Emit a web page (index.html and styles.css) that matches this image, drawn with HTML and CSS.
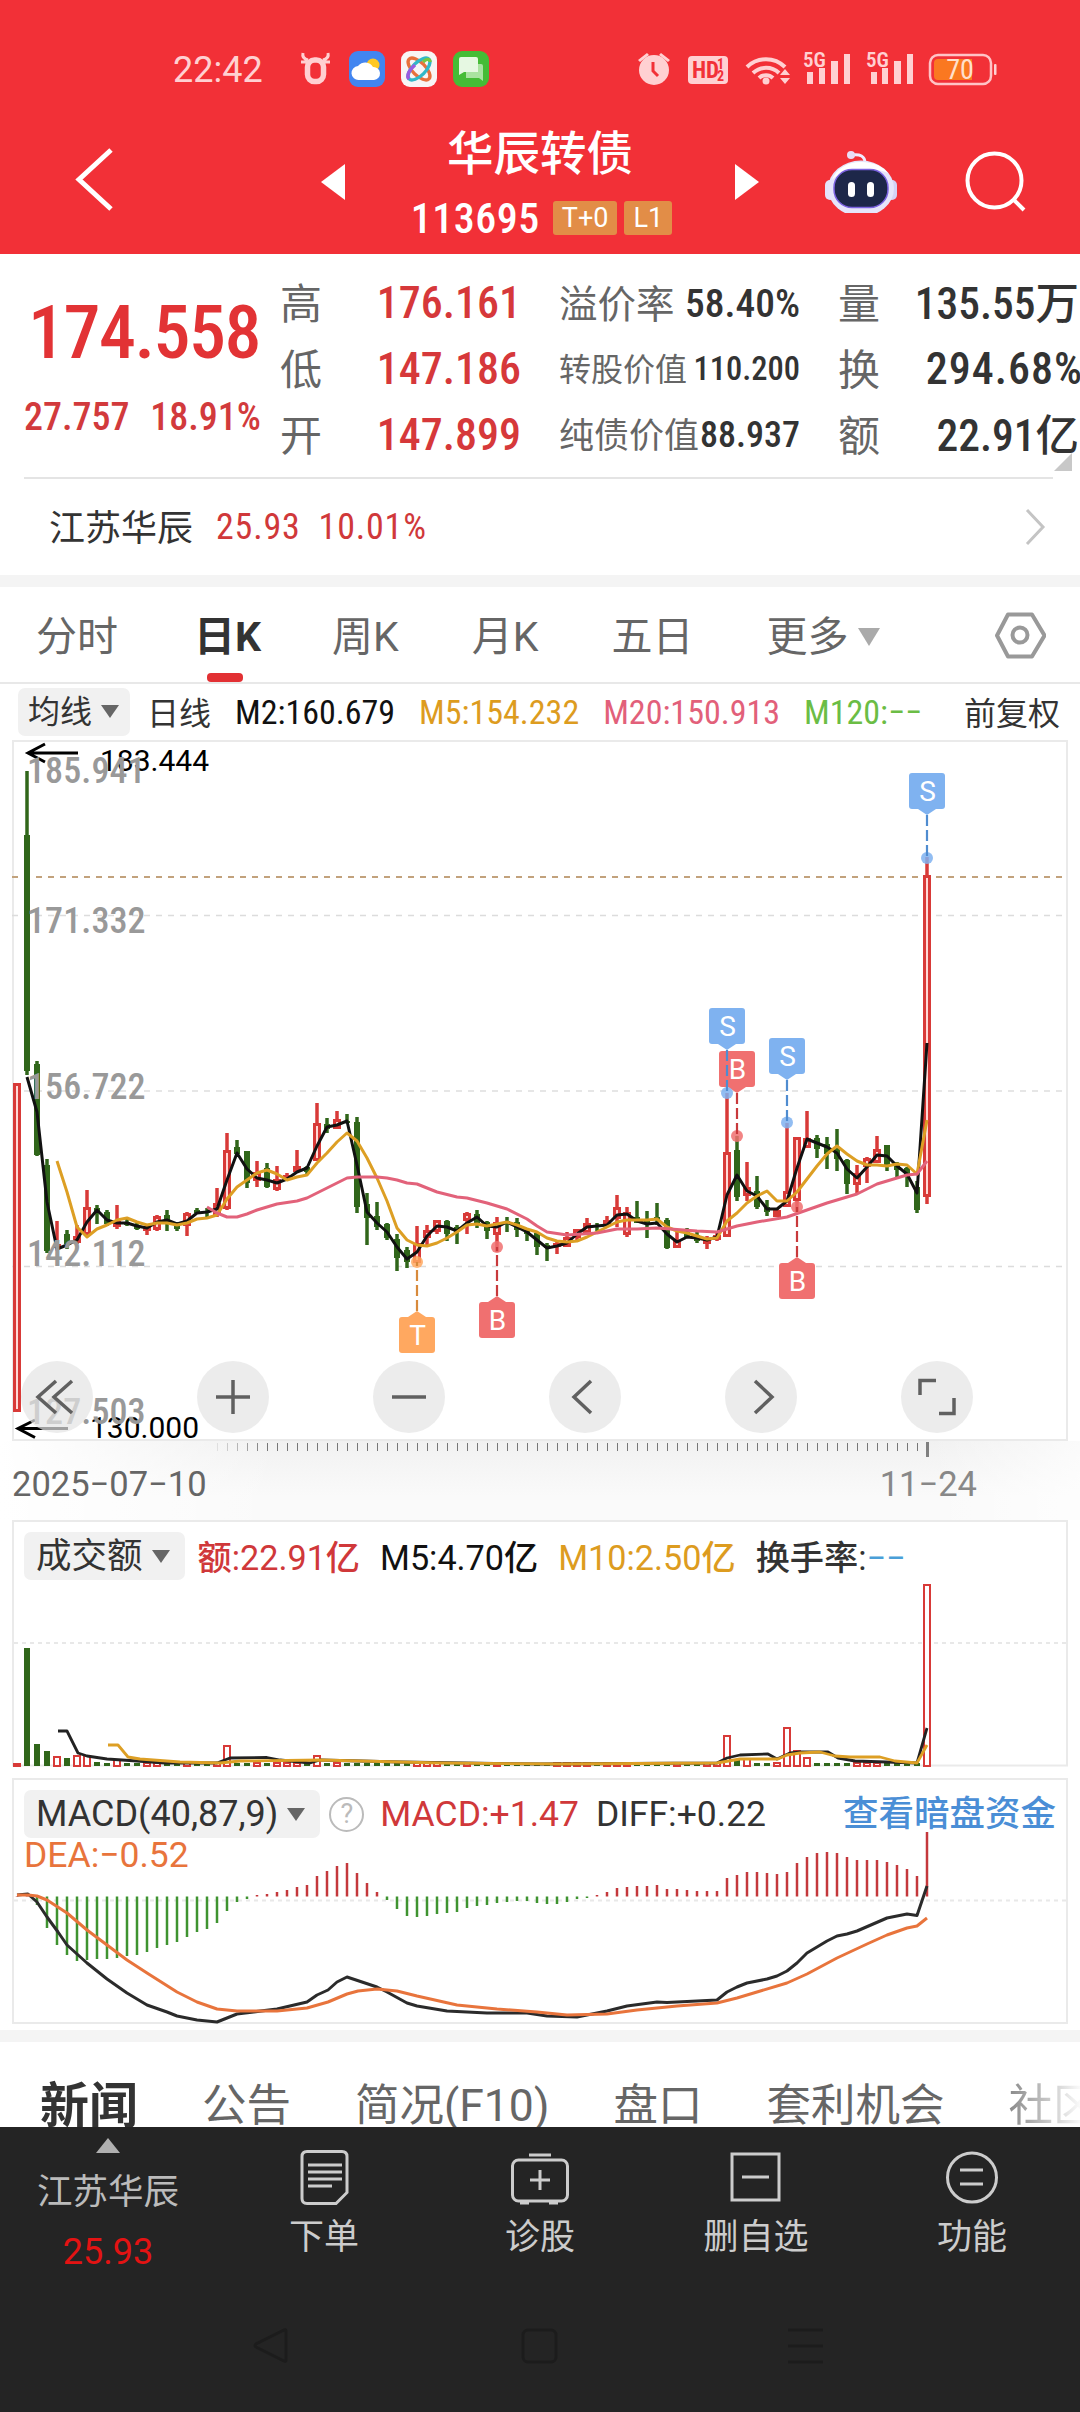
FILE: index.html
```html
<!DOCTYPE html>
<html lang="zh-CN">
<head>
    <meta charset="UTF-8">
    <meta name="viewport" content="width=device-width, initial-scale=1.0">
    <title>华辰转债 113695</title>
    <link rel="stylesheet" href="styles.css">
</head>
<body>
    <header class="header">
        <div class="status-bar">
            <span class="clock">22:42</span>
            <svg class="status-left" width="200" height="40" viewBox="295 49 200 40">
                <path d="M303 53c-1 4 1 6 5 7M328 53c1 4-1 6-5 7M301 62h6M330 62h-6" stroke="#ffd0d2" stroke-width="3" fill="none"/>
                <rect x="307.500" y="60" width="16" height="21.500" rx="7" fill="none" stroke="#ffd0d2" stroke-width="5.500"/>
                <rect x="349" y="51" width="36" height="36" rx="9" fill="#4285f0"/>
                <circle cx="373" cy="65" r="6.500" fill="#ffc824"/>
                <path d="M359 80a7 7 0 0 1-1-14 9 9 0 0 1 15 1 6.500 6.500 0 0 1 1 13z" fill="#fff"/>
                <rect x="401" y="51" width="36" height="36" rx="9" fill="#f8f5f5"/>
                <g fill="none" stroke-width="3.400">
                    <ellipse cx="419" cy="69" rx="14" ry="6.500" transform="rotate(45 419 69)" stroke="#e8703c"/>
                    <ellipse cx="419" cy="69" rx="14" ry="6.500" transform="rotate(-45 419 69)" stroke="#31b8c8"/>
                    <path d="M409 79c-3-3 0-9 6-14" stroke="#9b5be0"/>
                    <path d="M423 62c4-4 7-3 7 0" stroke="#77c843"/>
                </g>
                <rect x="453" y="51" width="36" height="36" rx="9" fill="#45bc36"/>
                <path d="M466 64h15q2 0 2 2v15l-4-3h-13z" fill="#a9e3a0"/>
                <path d="M461 57h15q2 0 2 2v13h-14l-5 3V59q0-2 2-2z" fill="#e6f8e2"/>
            </svg>
            <svg class="status-right" width="370" height="40" viewBox="635 49 370 40">
                <g fill="#ffd0d2">
                    <circle cx="654" cy="70" r="15"/>
                    <path d="M638 60l9-7 2 2-9 7zM670 60l-9-7-2 2 9 7z"/>
                    <rect x="688" y="56" width="40" height="28" rx="4"/>
                    <circle cx="766" cy="81" r="3.500"/>
                    <path d="M780 78l5 6 5-6zM780 75l5-6 5 6z"/>
                    <path d="M807 72h6v12h-6zM819 68h6v16h-6zM831 61h7v23h-7zM844 54h6v30h-6z"/>
                    <path d="M871 72h6v12h-6zM882 68h6v16h-6zM894 61h7v23h-7zM907 54h6v30h-6z"/>
                    <rect x="994" y="64" width="2.500" height="11" rx="1"/>
                </g>
                <path d="M653 62v9l5 5" fill="none" stroke="#f23037" stroke-width="3"/>
                <g fill="none" stroke="#ffd0d2" stroke-width="4">
                    <path d="M747 67a27 27 0 0 1 38 0M753 73a19 19 0 0 1 26 0M759 78a10 10 0 0 1 14 0"/>
                </g>
                <rect x="930" y="55" width="61" height="29" rx="8" fill="none" stroke="#ffc3c6" stroke-width="2.500"/>
                <path d="M938 59h34v21h-34q-4 0-4-4v-13q0-4 4-4z" fill="#fa7820"/>
                <text class="st-hd" x="692" y="78">HD</text>
                <text class="st-mini" x="717" y="69">1</text>
                <text class="st-mini" x="717" y="81">2</text>
                <text class="st-5g" x="803" y="67">5G</text>
                <text class="st-5g" x="866" y="67">5G</text>
                <text class="st-bat" x="960" y="79">70</text>
            </svg>
        </div>
        <div class="nav">
            <svg width="46" height="68" viewBox="72 145 46 68"><path d="M111 150L79 179.500 111 209" fill="none" stroke="#fff" stroke-width="5"/></svg>
            <svg class="prev" width="24" height="36" viewBox="0 0 24 36"><path d="M24 0v36L0 18z" fill="#fff"/></svg>
            <div class="title">
                <h1>华辰转债</h1>
                <div class="code">113695<span class="tag">T+0</span><span class="tag">L1</span></div>
            </div>
            <svg class="next" width="24" height="36" viewBox="0 0 24 36"><path d="M0 0v36l24-18z" fill="#fff"/></svg>
            <svg class="robot" width="74" height="68" viewBox="824 145 74 68">
                <path d="M865 163c0-7-5-9-13-8" fill="none" stroke="#f1ecff" stroke-width="3"/>
                <circle cx="851" cy="155" r="4" fill="#e9ddf6"/>
                <rect x="825" y="180" width="10" height="20" rx="5" fill="#e4e3fb"/>
                <rect x="887" y="180" width="10" height="20" rx="5" fill="#d4d2f5"/>
                <ellipse cx="861" cy="188.500" rx="33" ry="28" fill="#e6e5fa"/>
                <path d="M832 180c4-11 15-18 29-18s22 5 27 11c-10-5-44-7-56 7z" fill="#fff"/>
                <rect x="834" y="169.500" width="54" height="38" rx="18" fill="#1d2749" stroke="#7b62e0" stroke-width="1.500"/>
                <rect x="848" y="182" width="7" height="15" rx="3.500" fill="#fff"/>
                <rect x="867" y="182" width="7" height="15" rx="3.500" fill="#fff"/>
            </svg>
            <svg class="search" width="64" height="64" viewBox="964 150 64 64"><circle cx="994.500" cy="180.500" r="27" fill="none" stroke="#fff" stroke-width="4"/><path d="M1013 199l11 11" stroke="#fff" stroke-width="4"/></svg>
        </div>
    </header>

    <section class="quote">
        <div class="price">
            <div class="last">174.558</div>
            <div class="change"><span>27.757</span><span>18.91%</span></div>
        </div>
        <div class="cells">
            <div class="cell up"><label>高</label><b>176.161</b></div>
            <div class="cell up"><label>低</label><b>147.186</b></div>
            <div class="cell up"><label>开</label><b>147.899</b></div>
        </div>
        <div class="cells middle">
            <div class="cell size-l"><label>溢价率</label><b>58.40%</b></div>
            <div class="cell size-s"><label>转股价值</label><b>110.200</b></div>
            <div class="cell size-m"><label>纯债价值</label><b>88.937</b></div>
        </div>
        <div class="cells">
            <div class="cell cjk"><label>量</label><b>135.55万</b></div>
            <div class="cell percent"><label>换</label><b>294.68%</b></div>
            <div class="cell cjk"><label>额</label><b>22.91亿</b></div>
        </div>
        <i class="corner"></i>
    </section>

    <section class="stock">
        <span class="stock-name">江苏华辰</span>
        <span class="red">25.93</span>
        <span class="red">10.01%</span>
        <svg width="22" height="40" viewBox="0 0 22 40"><path d="M2 3l16 17L2 37" fill="none" stroke="#c4c4c4" stroke-width="3"/></svg>
    </section>

    <nav class="periods">
        <span>分时</span>
        <span class="active">日K</span>
        <span>周K</span>
        <span>月K</span>
        <span>五日</span>
        <span class="more">更多<i class="arrow"></i></span>
        <svg width="52" height="50" viewBox="994 610 52 50"><path d="M1008 614.500h24l12.500 21-12.500 21h-24l-11-21z" fill="none" stroke="#999" stroke-width="4" stroke-linejoin="round"/><circle cx="1020" cy="635" r="7.500" fill="none" stroke="#999" stroke-width="4"/></svg>
    </nav>

    <div class="legend ma">
        <span class="pill">均线<i class="arrow"></i></span>
        <span class="dark">日线</span>
        <span class="black">M2:160.679</span>
        <span class="orange">M5:154.232</span>
        <span class="pink">M20:150.913</span>
        <span class="green">M120:−−</span>
        <span class="dark adjust">前复权</span>
    </div>

    <div class="panel kline">
        <svg id="kline" width="1080" height="701" viewBox="0 740 1080 701"></svg>
        <div class="tools">
            <button><svg width="72" height="72"><path d="M35 20L17 36l18 16M51 20L33 36l18 16"/></svg></button>
            <button><svg width="72" height="72"><path d="M36 19v34M19 36h34"/></svg></button>
            <button><svg width="72" height="72"><path d="M19 36h34"/></svg></button>
            <button><svg width="72" height="72"><path d="M42 20L25 36l17 16"/></svg></button>
            <button><svg width="72" height="72"><path d="M30 20l17 16-17 16"/></svg></button>
            <button><svg width="72" height="72"><path d="M19 34V19.500h16M38 52.500h15V37"/></svg></button>
        </div>
    </div>

    <div class="dates">
        <svg id="ticks" width="1080" height="18" viewBox="0 1441 1080 18"></svg>
        <div class="date-labels"><span>2025−07−10</span><span>11−24</span></div>
    </div>

    <div class="panel volume">
        <svg id="volume" width="1080" height="247" viewBox="0 1520 1080 247"></svg>
        <div class="legend">
            <span class="pill">成交额<i class="arrow"></i></span>
            <span class="red">额:22.91亿</span>
            <span class="black">M5:4.70亿</span>
            <span class="orange">M10:2.50亿</span>
            <span class="dark">换手率:<em>−−</em></span>
        </div>
    </div>

    <div class="panel macd">
        <svg id="macd" width="1080" height="246" viewBox="0 1778 1080 246"></svg>
        <div class="legend">
            <span class="pill">MACD(40,87,9)<i class="arrow"></i></span>
            <span class="help">?</span>
            <span class="red">MACD:+1.47</span>
            <span class="dark">DIFF:+0.22</span>
            <a class="link">查看暗盘资金</a>
            <span class="dea">DEA:−0.52</span>
        </div>
    </div>

    <nav class="news">
        <span class="active">新闻</span>
        <span>公告</span>
        <span>简况(F10)</span>
        <span>盘口</span>
        <span>套利机会</span>
        <span class="fade">社区</span>
    </nav>

    <footer class="footer">
        <div class="actions">
            <div class="related">
                <i></i>
                <span>江苏华辰</span>
                <span class="related-price">25.93</span>
            </div>
            <div class="action">
                <svg width="60" height="60" viewBox="293 2147 60 60"><path d="M306 2151.500h35q5 0 5 5v36l-11 11h-29q-5 0-5-5v-42q0-5 5-5z"/><path d="M307 2165h34M307 2172h34M307 2179h34M307 2186h24"/></svg>
                <span>下单</span>
            </div>
            <div class="action">
                <svg width="60" height="60" viewBox="510 2147 60 60"><rect x="512.500" y="2160" width="55" height="41" rx="6"/><path d="M529 2155h22M540 2170v20M530 2180h20M520 2203h9M549 2203h9"/></svg>
                <span>诊股</span>
            </div>
            <div class="action">
                <svg width="60" height="60" viewBox="726 2147 60 60"><path d="M732 2154h47v46h-47zM742 2177h27"/></svg>
                <span>删自选</span>
            </div>
            <div class="action">
                <svg width="60" height="60" viewBox="942 2147 60 60"><circle cx="972" cy="2177.500" r="24.500"/><path d="M960 2170h23M960 2184h23"/></svg>
                <span>功能</span>
            </div>
        </div>
        <svg class="system-nav" width="1080" height="60" viewBox="0 2316 1080 60">
            <path d="M286 2331v29q0 2-2 1l-28-14q-2-1 0-3l28-14q2-1 2 1z"/>
            <rect x="523" y="2330" width="33" height="32" rx="5"/>
            <path d="M788 2330h35M788 2346h35M788 2362h35"/>
        </svg>
    </footer>

    <script src="chart.js"></script>
</body>
</html>
```
FILE: styles.css
```css
* {
    box-sizing: border-box;
}

body {
    margin: 0;
    width: 1080px;
    height: 2412px;
    overflow: hidden;
    background: #fff;
    color: #333;
    font-family: "Roboto Condensed", Roboto, "Noto Sans CJK SC", sans-serif;
}

svg {
    display: block;
    flex: none;
}

i, em {
    font-style: normal;
}

.red { color: #d0383a; }
.black { color: #111; }
.dark { color: #333; }
.orange { color: #dd9c1f; }
.pink { color: #e2607a; }
.green { color: #6bbd45; }

/* header */
.header {
    height: 254px;
    background: #f23037;
    color: #fff;
}

.status-bar {
    display: flex;
    padding: 49px 75px 0 173px;
    height: 89px;
}

.clock {
    width: 122px;
    font: 400 36px/42px Roboto, sans-serif;
    color: #ffd0d2;
}

.status-right {
    margin-left: auto;
}

.status-right text {
    font-family: "Roboto Condensed", sans-serif;
}

.st-hd {
    font-size: 23px;
    font-weight: 700;
    fill: #f23037;
}

.st-mini {
    font-size: 14px;
    font-weight: 700;
    fill: #f23037;
}

.st-5g {
    font-size: 21px;
    font-weight: 600;
    fill: #ffd0d2;
}

.st-bat {
    font-size: 28px;
    text-anchor: middle;
    fill: #ffe0cc;
}

.nav {
    display: flex;
    align-items: flex-start;
    height: 165px;
    padding: 33px 52px 0 72px;
}

.nav > svg {
    margin-top: 23px;
}

.nav .prev {
    margin: 42px 0 0 203px;
}

.nav .next {
    margin-top: 42px;
}

.title {
    width: 390px;
    text-align: center;
}

.title h1 {
    margin: 0;
    padding-top: 1px;
    font-size: 46.500px;
    font-weight: 500;
    line-height: 62px;
}

.code {
    display: flex;
    justify-content: center;
    align-items: center;
    height: 66px;
    gap: 7px;
    padding-left: 3px;
    font-size: 42px;
    font-weight: 500;
    letter-spacing: 0.500px;
}

.code .tag:first-child {
    margin-left: 6px;
}

.tag {
    padding: 0 9px;
    border-radius: 3px;
    background: #e28d47;
    font: 400 27px/34px Roboto, sans-serif;
    letter-spacing: 0;
}

.nav .robot {
    margin: 23px 0 0 65px;
}

.nav .search {
    margin: 28px 0 0 66px;
}

/* quote */
.quote {
    display: grid;
    grid-template-columns: 242px 241px 241px 243px;
    column-gap: 38px;
    position: relative;
    height: 225px;
    padding-top: 16px;
}

.quote::after {
    content: "";
    position: absolute;
    left: 24px;
    right: 27px;
    bottom: 0;
    height: 2px;
    background: #e4e4e4;
}

.price {
    color: #e23335;
    font-weight: 500;
}

.last {
    padding-left: 28px;
    font-size: 74px;
    font-weight: 500;
    line-height: 126px;
    letter-spacing: -1.500px;
}

.change {
    display: flex;
    justify-content: space-between;
    width: 261px;
    padding-left: 24px;
    font-size: 38px;
    font-weight: 500;
    line-height: 42px;
    color: #d23a3c;
    white-space: nowrap;
}

.cell {
    display: flex;
    justify-content: space-between;
    align-items: center;
    height: 66px;
    white-space: nowrap;
    font-size: 44px;
}

.cell label {
    padding-bottom: 5px;
    font-size: 42px;
    color: #666;
}

.cell b {
    font-weight: 500;
    color: #333;
}

.up b {
    color: #d6383a;
}

.cjk b {
    padding-bottom: 5px;
    font-size: 43.500px;
    margin-right: 2px;
}

.percent b {
    letter-spacing: 1px;
    margin-right: -2px;
}

.middle .size-l { font-size: 39.500px; }
.middle .size-s { font-size: 32.500px; }
.middle .size-m { font-size: 36px; }
.size-l label { font-size: 38.500px; }
.size-s label { font-size: 32px; }
.size-m label { font-size: 35px; }

.corner {
    position: absolute;
    right: 8px;
    bottom: 8px;
    border-left: 18px solid transparent;
    border-bottom: 18px solid #c8c8c8;
}

/* underlying stock */
.stock {
    display: flex;
    align-items: center;
    height: 108px;
    padding: 0 33px 0 49px;
    border-bottom: 12px solid #f4f4f4;
    font-size: 36px;
}

.stock-name {
    margin-right: 23px;
    padding-bottom: 5px;
}

.stock .red {
    margin-right: 18px;
    font-weight: 450;
    letter-spacing: 0.800px;
}

.stock svg {
    margin-left: auto;
}

/* period tabs */
.periods {
    display: flex;
    align-items: center;
    height: 97px;
    padding: 0 34px 0 36px;
    border-bottom: 2px solid #e8e8e8;
    font: 41px Roboto, "Noto Sans CJK SC", sans-serif;
    color: #666;
}

.periods span {
    margin-right: 73px;
    padding-bottom: 3px;
    white-space: nowrap;
}

.periods .active {
    position: relative;
    margin: 0 71px 0 3px;
    color: #333;
    font-weight: 700;
}

.periods .active::after {
    content: "";
    position: absolute;
    left: 13px;
    bottom: -16px;
    width: 36px;
    height: 9px;
    border-radius: 4px;
    background: #e23033;
}

.periods svg {
    margin-left: auto;
}

.arrow {
    display: inline-block;
    border: 9.500px solid transparent;
    border-top: 13px solid #666;
    border-bottom: 0;
    vertical-align: 5px;
    margin-left: 9px;
}

.periods .more {
    margin: 0;
}

.periods .arrow {
    border: 11px solid transparent;
    border-top: 18px solid #aaa;
    border-bottom: 0;
}

/* indicator legends */
.legend {
    display: flex;
    align-items: center;
    font: 450 34.500px Roboto, "Noto Sans CJK SC", sans-serif;
    white-space: nowrap;
}

.pill {
    border-radius: 7px;
    background: #f1f1f1;
    color: #333;
    font-weight: 400;
    line-height: 48px;
}

.ma {
    height: 56px;
    padding: 0 20px 0 18px;
    gap: 24px;
    font-family: "Roboto Condensed", "Noto Sans CJK SC", sans-serif;
    font-size: 34px;
}

.legend.ma .pill, .ma .dark {
    font-size: 32px;
    font-weight: 400;
}

.ma .pill {
    margin-right: -7px;
    padding: 0 11px 0 10px;
}

.ma .dark {
    padding-bottom: 3px;
}

.ma .adjust {
    margin-left: auto;
}

/* chart panels */
.panel {
    display: grid;
}

.panel > * {
    grid-area: 1 / 1;
}

.axis {
    font-size: 36px;
    font-weight: 500;
    letter-spacing: 0.100px;
    fill: #999;
}

.extreme {
    font: 30px Roboto, sans-serif;
    fill: #000;
}

.flag {
    font: 28px Roboto, sans-serif;
    fill: #fff;
    text-anchor: middle;
}

.tools {
    align-self: end;
    display: flex;
    justify-content: space-between;
    padding: 0 107px 8px 21px;
}

.tools button {
    width: 72px;
    height: 72px;
    padding: 0;
    border: 0;
    border-radius: 50%;
    background: rgba(228, 228, 228, 0.7);
}

.tools path {
    fill: none;
    stroke: #606060;
    stroke-width: 3.500;
}

.dates {
    height: 79px;
    background:
        linear-gradient(90deg, #fff 0, rgba(255, 255, 255, 0) 280px, rgba(255, 255, 255, 0) 930px, rgba(255, 255, 255, 0.7)),
        linear-gradient(#f1f1f1, #fafafa 55px);
}

.date-labels {
    display: flex;
    justify-content: space-between;
    padding: 4px 103px 0 12px;
    font: 450 34.500px/42px Roboto, sans-serif;
    color: #666;
}

.date-labels span:last-child {
    color: #888;
}

.volume .legend {
    height: 50px;
    margin-top: 11px;
    padding-left: 24px;
    gap: 20px;
}

.volume .legend span:not(.pill) {
    padding-bottom: 2px;
    font-size: 34.200px;
}

.legend .pill {
    font-size: 35.500px;
}

.volume .pill, .macd .pill {
    padding: 0 15px 0 12px;
}

.volume .pill {
    margin-right: -7px;
}

.volume em {
    color: #4a9fd8;
}

.macd {
    margin-top: 11px;
    height: 246px;
}

.macd .legend {
    flex-wrap: wrap;
    align-content: flex-start;
    padding: 12px 24px 0 24px;
    font-size: 35.500px;
}

.macd .legend .pill {
    font-size: 36px;
}

.help {
    width: 35px;
    height: 35px;
    margin: 0 16px 0 9px;
    border: 2px solid #bbb;
    border-radius: 50%;
    text-align: center;
    font-size: 27px;
    line-height: 31px;
    color: #bbb;
}

.macd .legend .red {
    margin-right: 17px;
}

.link {
    margin-left: auto;
    color: #4a8ed6;
    line-height: 44px;
}

.dea {
    width: 100%;
    line-height: 34px;
    color: #e8743c;
}

/* news tabs */
.news {
    display: flex;
    align-items: center;
    height: 97px;
    margin-top: 6px;
    padding: 34px 0 0 40px;
    gap: 64px;
    border-top: 12px solid #f4f4f4;
    font: 44.500px Roboto, "Noto Sans CJK SC", sans-serif;
    color: #666;
    white-space: nowrap;
}

.news .active {
    color: #333;
    font-size: 49px;
    font-weight: 700;
}

.fade {
    background: linear-gradient(90deg, #888, #fff 75px);
    background-clip: text;
    -webkit-background-clip: text;
    color: transparent;
}

/* bottom bar */
.footer {
    position: relative;
    height: 285px;
    background: #242424;
    color: #ccc;
}

.actions {
    display: grid;
    grid-template-columns: repeat(5, 1fr);
    height: 189px;
    font-size: 35px;
}

.actions > div {
    display: flex;
    flex-direction: column;
    align-items: center;
}

.related {
    padding-top: 11px;
    color: #bbb;
}

.related i {
    border: 12.500px solid transparent;
    border-top: 0;
    border-bottom: 15px solid #b0b0b0;
}

.related span {
    line-height: 60px;
    margin-top: 9px;
    font-size: 35.500px;
}

.related .related-price {
    margin-top: 0;
    font: 36px/60px Roboto, sans-serif;
    color: #e31313;
}

.action {
    padding-top: 20px;
}

.action svg {
    fill: none;
    stroke: #ccc;
    stroke-width: 3;
}

.action span {
    line-height: 61px;
}

.system-nav {
    fill: none;
    stroke: #1c1c1c;
    stroke-width: 3;
}
```
FILE: chart.js
```javascript
const UP = '#d83a38';
const DOWN = '#30661a';
const STEP = 10;
const X0 = 17;

// high, body top, body bottom, low, direction
const candles = [
    [1083, 1083, 1412, 1412, 1], [771, 835, 1071, 1075, 0], [1061, 1064, 1155, 1156, 0], [1159, 1165, 1251, 1253, 0],
    [1221, 1244, 1248, 1251, 1], [1230, 1234, 1244, 1249, 0], [1225, 1236, 1243, 1244, 1], [1190, 1207, 1235, 1237, 1],
    [1205, 1208, 1211, 1224, 0], [1210, 1212, 1224, 1226, 0], [1205, 1221, 1227, 1229, 1], [1218, 1222, 1225, 1226, 0],
    [1223, 1225, 1229, 1230, 0], [1225, 1227, 1231, 1235, 1], [1215, 1216, 1230, 1231, 1], [1210, 1215, 1222, 1231, 0],
    [1222, 1223, 1229, 1231, 0], [1212, 1213, 1226, 1236, 1], [1208, 1210, 1213, 1214, 0], [1208, 1211, 1212, 1217, 0],
    [1188, 1203, 1215, 1217, 1], [1133, 1150, 1209, 1210, 1], [1140, 1147, 1154, 1157, 0], [1151, 1151, 1183, 1188, 0],
    [1161, 1172, 1181, 1187, 1], [1163, 1168, 1187, 1188, 0], [1166, 1179, 1190, 1191, 1], [1173, 1175, 1179, 1180, 1],
    [1150, 1166, 1172, 1173, 1], [1166, 1167, 1172, 1175, 0], [1103, 1123, 1161, 1161, 1], [1118, 1124, 1129, 1133, 0],
    [1111, 1119, 1129, 1129, 1], [1114, 1121, 1122, 1123, 0], [1117, 1122, 1207, 1213, 0], [1193, 1204, 1218, 1245, 0],
    [1202, 1216, 1227, 1230, 0], [1223, 1224, 1238, 1240, 0], [1234, 1239, 1258, 1271, 0], [1247, 1250, 1262, 1268, 0],
    [1226, 1243, 1263, 1263, 1], [1225, 1230, 1238, 1245, 1], [1220, 1220, 1232, 1234, 1], [1220, 1221, 1234, 1241, 0],
    [1225, 1227, 1232, 1244, 0], [1212, 1213, 1221, 1234, 1], [1210, 1214, 1223, 1228, 0], [1221, 1222, 1231, 1239, 0],
    [1217, 1222, 1235, 1252, 1], [1217, 1221, 1224, 1232, 0], [1218, 1222, 1230, 1237, 0], [1229, 1231, 1234, 1241, 0],
    [1232, 1233, 1247, 1255, 0], [1243, 1245, 1248, 1261, 0], [1242, 1243, 1247, 1254, 1], [1232, 1237, 1247, 1247, 1],
    [1229, 1229, 1238, 1242, 1], [1218, 1223, 1233, 1233, 1], [1223, 1225, 1227, 1231, 0], [1216, 1220, 1224, 1224, 1],
    [1195, 1207, 1219, 1227, 1], [1207, 1212, 1235, 1237, 1], [1201, 1217, 1223, 1223, 0], [1211, 1221, 1223, 1238, 0],
    [1203, 1217, 1220, 1225, 0], [1218, 1220, 1248, 1249, 0], [1232, 1240, 1248, 1248, 1], [1228, 1232, 1238, 1238, 0],
    [1232, 1235, 1241, 1243, 0], [1236, 1239, 1244, 1249, 1], [1232, 1235, 1240, 1241, 1], [1093, 1152, 1237, 1237, 1],
    [1136, 1150, 1197, 1201, 0], [1162, 1187, 1196, 1201, 1], [1176, 1191, 1207, 1209, 0], [1200, 1207, 1212, 1216, 0],
    [1208, 1210, 1217, 1217, 1], [1123, 1191, 1207, 1207, 1], [1137, 1137, 1201, 1212, 1], [1111, 1138, 1148, 1148, 1],
    [1135, 1138, 1149, 1158, 0], [1137, 1144, 1154, 1169, 0], [1129, 1148, 1159, 1171, 0], [1159, 1160, 1184, 1194, 0],
    [1165, 1173, 1185, 1193, 1], [1157, 1158, 1167, 1183, 1], [1136, 1149, 1163, 1163, 1], [1145, 1145, 1165, 1171, 0],
    [1162, 1164, 1170, 1179, 0], [1167, 1168, 1177, 1187, 0], [1181, 1187, 1210, 1213, 0], [857, 875, 1197, 1204, 1]
];

// moving averages, one value per candle from the given index
const ma2 = [1077, 1112, 1202, 1249, 1245, 1240, 1222, 1210, 1220, 1223, 1223, 1226, 1228, 1222, 1220, 1224, 1221, 1213,
    1212, 1209, 1180, 1153, 1169, 1178, 1180, 1183, 1179, 1172, 1168, 1146, 1127, 1125, 1121, 1165, 1212, 1223, 1232,
    1247, 1259, 1252, 1236, 1226, 1227, 1231, 1223, 1217, 1226, 1227, 1222, 1227, 1232, 1240, 1248, 1246, 1243, 1234,
    1227, 1226, 1225, 1215, 1214, 1221, 1224, 1223, 1234, 1242, 1237, 1238, 1240, 1237, 1195, 1175, 1191, 1196, 1209,
    1209, 1201, 1168, 1139, 1143, 1147, 1153, 1169, 1178, 1167, 1155, 1156, 1166, 1174, 1193, 1043];
const ma5 = [1161, 1192, 1227, 1237, 1229, 1225, 1220, 1218, 1222, 1225, 1223, 1223, 1225, 1223, 1219, 1218, 1215, 1199,
    1187, 1180, 1173, 1170, 1174, 1180, 1177, 1175, 1163, 1153, 1142, 1133, 1141, 1158, 1178, 1201, 1228, 1240, 1245,
    1246, 1243, 1238, 1232, 1225, 1224, 1226, 1224, 1222, 1225, 1229, 1232, 1238, 1241, 1242, 1241, 1237, 1232, 1227,
    1222, 1220, 1220, 1220, 1219, 1227, 1231, 1233, 1236, 1239, 1238, 1221, 1213, 1203, 1196, 1191, 1201, 1201, 1192,
    1179, 1166, 1154, 1146, 1154, 1161, 1165, 1165, 1166, 1164, 1165, 1174, 1120];
const ma20 = [[207, 1207], [217, 1213], [227, 1217], [237, 1217], [247, 1214], [257, 1210], [277, 1204], [297, 1201],
    [307, 1198], [327, 1188], [347, 1178], [357, 1177], [377, 1177], [387, 1178], [397, 1180], [407, 1183], [417, 1184],
    [437, 1192], [457, 1197], [467, 1198], [487, 1203], [507, 1209], [527, 1219], [537, 1226], [547, 1232], [567, 1235],
    [597, 1233], [617, 1229], [637, 1229], [657, 1228], [697, 1231], [717, 1232], [737, 1226], [757, 1222], [787, 1217],
    [807, 1210], [827, 1203], [847, 1197], [857, 1194], [867, 1189], [877, 1184], [897, 1178], [907, 1175], [917, 1174],
    [927, 1161]];

// trade flags: x, dot y, box top, letter, colour, line colour
const flags = [
    [737, 1136, 1051, 'B', '#f07070', '#c8393c'],
    [727, 1093, 1008, 'S', '#7fb2f0', '#4f8cd0'],
    [787, 1122.5, 1038, 'S', '#7fb2f0', '#4f8cd0'],
    [797, 1207, 1263, 'B', '#f07070', '#c8393c'],
    [417, 1262, 1317, 'T', '#ffa860', '#d88a3c'],
    [497, 1247, 1302, 'B', '#f07070', '#c8393c'],
    [927, 858, 773, 'S', '#7fb2f0', '#4f8cd0']
];

const volumeTops = { 0: 1764, 1: 1648, 2: 1744, 3: 1751, 4: 1757, 5: 1758, 6: 1756, 7: 1756, 8: 1762, 10: 1760,
    21: 1746, 30: 1756, 71: 1736, 72: 1760, 73: 1759, 77: 1728, 78: 1751, 79: 1758, 91: 1585 };
const volMa5 = [[58, 1731], [67, 1731], [78, 1753], [87, 1756], [107, 1759], [137, 1761], [165, 1763], [217, 1763],
    [230, 1758], [267, 1757.5], [280, 1760], [310, 1763], [320, 1760], [360, 1761], [400, 1762], [540, 1764], [717, 1763],
    [727, 1758], [740, 1755], [768, 1754], [777, 1759], [790, 1753], [800, 1752], [828, 1752], [838, 1758], [855, 1761],
    [917, 1763], [927, 1728]];
const volMa10 = [[108, 1745], [118, 1745], [128, 1757], [140, 1759], [180, 1762], [220, 1763], [240, 1761], [320, 1760],
    [400, 1762], [440, 1763], [560, 1764], [717, 1763], [740, 1759], [765, 1759], [778, 1759], [787, 1755], [800, 1753],
    [820, 1752], [835, 1756], [850, 1757], [880, 1757], [895, 1761], [917, 1763], [927, 1745]];

const macdBars = [1896, 1896, 1905, 1928, 1945, 1955, 1961, 1960, 1959, 1959, 1958, 1956, 1955, 1952, 1948, 1945, 1942,
    1937, 1932, 1929, 1923, 1911, 1902, 1899, 1895, 1894, 1892, 1890, 1887, 1885, 1876, 1871, 1866, 1863, 1873, 1883,
    1892, 1900, 1909, 1916, 1917, 1916, 1914, 1913, 1912, 1908, 1906, 1905, 1903, 1902, 1901, 1901, 1903, 1904, 1904,
    1902, 1899, 1898, 1895, 1892, 1888, 1887, 1886, 1886, 1885, 1889, 1889, 1890, 1891, 1891, 1891, 1878, 1875, 1872,
    1872, 1873, 1874, 1872, 1863, 1857, 1853, 1852, 1853, 1857, 1860, 1860, 1860, 1862, 1865, 1869, 1876, 1832];
const diff = [[17, 1895], [28, 1894], [37, 1902], [47, 1917], [58, 1932], [67, 1945], [87, 1963], [107, 1979], [127, 1993],
    [147, 2005], [167, 2012], [177, 2016], [197, 2020], [217, 2022], [237, 2014], [277, 2009], [307, 2002], [317, 1995],
    [328, 1990], [337, 1982], [347, 1977], [377, 1987], [387, 1992], [407, 2003], [417, 2006], [447, 2011], [487, 2013],
    [527, 2013], [547, 2016], [577, 2017], [607, 2011], [627, 2006], [657, 2002], [667, 2002.5], [717, 2000], [727, 1992],
    [737, 1987], [747, 1983], [767, 1979], [777, 1976], [787, 1971], [797, 1963], [807, 1953], [817, 1947], [827, 1941],
    [837, 1936], [847, 1934], [857, 1931], [887, 1918], [907, 1914], [917, 1915.5], [927, 1886]];
const dea = [[17, 1895], [28, 1895], [37, 1896], [47, 1900], [67, 1913], [87, 1930], [127, 1960], [147, 1973], [177, 1992],
    [197, 2002], [217, 2009], [237, 2011], [277, 2011], [307, 2008], [328, 2002], [347, 1994], [358, 1991], [377, 1989],
    [397, 1991], [417, 1996], [457, 2005], [497, 2009], [537, 2012], [567, 2015], [607, 2014], [637, 2010], [677, 2006],
    [717, 2003], [737, 1998], [757, 1992], [787, 1983], [807, 1974], [837, 1958], [867, 1944], [887, 1935], [907, 1928],
    [917, 1926], [927, 1918]];

const x = i => X0 + i * STEP;
const line = (x1, y1, x2, y2, color, width, dash) =>
    `<line x1="${x1}" y1="${y1}" x2="${x2}" y2="${y2}" stroke="${color}" stroke-width="${width}"${dash ? ` stroke-dasharray="${dash}"` : ''}/>`;
const rect = (rx, ry, w, h, fill, stroke) =>
    `<rect x="${rx}" y="${ry}" width="${w}" height="${h}" fill="${fill}"${stroke ? ` stroke="${stroke}" stroke-width="2"` : ''}/>`;
const poly = (points, color, width) =>
    `<polyline points="${points.join(' ')}" fill="none" stroke="${color}" stroke-width="${width}" stroke-linejoin="round"/>`;
const series = (values, start) => values.map((v, i) => [x(i + start), v]);
const frame = (top, bottom) => rect(13, top, 1054, bottom - top, 'none', '#eaeaea');

function drawKline() {
    let s = frame(741, 1440);
    s += line(12, 915.5, 1066, 915.5, '#dcdcdc', 1.5, '6 6');
    s += line(12, 1091, 1066, 1091, '#e6e6e6', 2, '6 6');
    s += line(12, 1266.5, 1066, 1266.5, '#dcdcdc', 1.5, '6 6');
    s += line(12, 877, 1066, 877, '#c2a27c', 2, '6 6');
    candles.forEach(([high, top, bottom, low, up], i) => {
        const color = up ? UP : DOWN;
        if (up) {
            s += line(x(i), high, x(i), top, color, 3.5) + line(x(i), bottom, x(i), low, color, 3.5);
            s += rect(x(i) - 4, top, 8, Math.max(bottom - top, 3), color);
            if (bottom - top > 7) {
                s += rect(x(i) - 1, top + 3, 2, bottom - top - 6, '#ffd9d6');
            }
        } else {
            s += line(x(i), high, x(i), low, color, 3.5);
            s += rect(x(i) - 3, top, 6, Math.max(bottom - top, 2), color);
        }
    });
    s += poly(series(ma2, 1), '#111', 3);
    s += poly(series(ma5, 4), '#dd9f24', 3);
    s += poly(ma20, '#e2627a', 3);

    flags.forEach(([fx, dot, top, letter, fill, stroke]) => {
        const above = top < dot;
        const edge = above ? top + 36 : top;
        const tip = above ? edge + 6 : edge - 6;
        s += `<circle cx="${fx}" cy="${dot}" r="6" fill="${fill}" opacity="0.85"/>`;
        s += `<rect x="${fx - 18}" y="${top}" width="36" height="36" rx="3" fill="${fill}"/>`;
        s += `<path d="M${fx - 9} ${edge}L${fx} ${tip}L${fx + 9} ${edge}z" fill="${fill}"/>`;
        s += line(fx, tip, fx, dot, stroke, 2.2, '11 4');
        s += `<text class="flag" x="${fx + 0.5}" y="${top + 28}">${letter}</text>`;
    });

    s += `<path d="M78 753H28M45 744L28 753L45 762" fill="none" stroke="#000" stroke-width="3"/>`;
    s += `<path d="M68 1428.5H18M35 1420L18 1428.5L35 1437.5" fill="none" stroke="#000" stroke-width="3"/>`;
    s += `<text class="extreme" x="100" y="771">183.444</text><text class="extreme" x="90" y="1438">130.000</text>`;
    [['185.941', 783], ['171.332', 933], ['156.722', 1099], ['142.112', 1266], ['127.503', 1424]].forEach(([t, y]) => {
        s += `<text class="axis" x="27" y="${y}">${t}</text>`;
    });
    document.getElementById('kline').innerHTML = s;
}

function drawTicks() {
    let s = '';
    for (let i = 20; i < 91; i++) {
        s += `<rect x="${x(i)}" y="1443" width="1" height="8" fill="#777" opacity="${Math.min(1, (i - 19) / 6)}"/>`;
    }
    s += rect(x(91) - 1, 1442, 3, 15, '#808080');
    document.getElementById('ticks').innerHTML = s;
}

function drawVolume() {
    let s = frame(1521, 1765.5) + line(14, 1643, 1066, 1643, '#e8e8e8', 2, '4 4');
    candles.forEach((c, i) => {
        const top = volumeTops[i] || 1763;
        s += c[4] ? rect(x(i) - 3, top, 6, 1766 - top, '#fff', UP) : rect(x(i) - 3, top, 6, 1766 - top, DOWN);
    });
    s += poly(volMa5, '#222', 2.8) + poly(volMa10, '#dd9f24', 2.8);
    document.getElementById('volume').innerHTML = s;
}

function drawMacd() {
    let s = frame(1779, 2023) + line(14, 1900.5, 1066, 1900.5, '#e8e8e8', 2, '4 4');
    macdBars.forEach((y, i) => {
        s += line(x(i), 1896.5, x(i), y, y < 1896.5 ? '#c4383c' : '#3f9330', 2.5);
    });
    s += poly(diff, '#2b2b2b', 3) + poly(dea, '#e8743c', 3);
    document.getElementById('macd').innerHTML = s;
}

drawKline();
drawTicks();
drawVolume();
drawMacd();
```
